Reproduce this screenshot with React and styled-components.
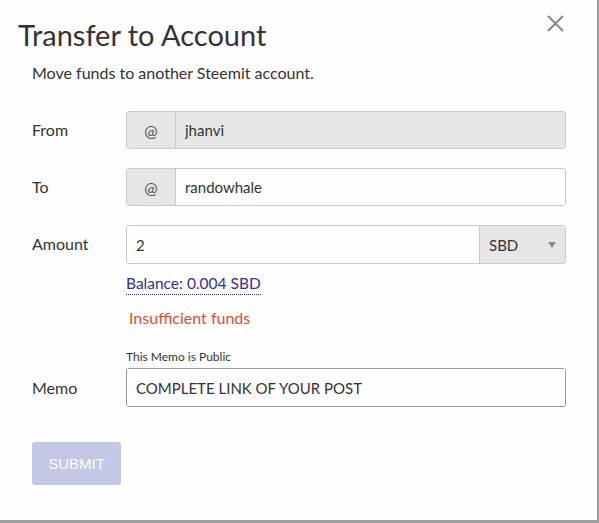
import * as React from "react";
import styled, { createGlobalStyle } from "styled-components";

const GlobalStyle = createGlobalStyle`
  html, body {
    margin: 0;
    padding: 0;
    background: #9e9e9e;
  }
  * {
    box-sizing: border-box;
  }
`;

const font = '"Lato", "Noto Sans", "Liberation Sans", sans-serif';

const Modal = styled.div`
  position: relative;
  width: 597px;
  height: 520px;
  background: #fefefe;
  font-family: ${font};
  color: #333;
  padding: 14px 0 0 0;
`;

const Close = styled.button`
  position: absolute;
  top: 13px;
  right: 32px;
  width: 20px;
  height: 20px;
  padding: 0;
  border: 0;
  background: none;
  display: flex;
  align-items: center;
  justify-content: center;
  cursor: pointer;
`;

const Title = styled.h1`
  margin: 0 0 0 18px;
  font-size: 29px;
  font-weight: 400;
  line-height: 42px;
  color: #333;
`;

const Subtitle = styled.p`
  margin: 5px 0 0 32px;
  font-size: 16px;
  line-height: 24px;
  color: #333;
`;

const Form = styled.div`
  display: grid;
  grid-template-columns: 94px 440px;
  row-gap: 19px;
  margin: 26px 0 0 32px;
  align-items: start;
`;

const Label = styled.label`
  font-size: 16px;
  line-height: 38px;
  color: #333;
`;

const Field = styled.div`
  display: flex;
  flex-direction: column;
`;

const Group = styled.div`
  display: flex;
  height: ${(p) => (p.tall ? "39px" : "38px")};
  border: 1px solid #cacaca;
  border-radius: 3px;
  overflow: hidden;
`;

const Addon = styled.span`
  width: 49px;
  display: flex;
  align-items: center;
  justify-content: center;
  background: #e6e6e6;
  border-right: 1px solid #cacaca;
  font-size: 16px;
  color: #555;
`;

const Input = styled.input`
  flex: 1;
  min-width: 0;
  height: 100%;
  border: 0;
  outline: none;
  padding: 0 9px;
  font-family: ${font};
  font-size: 15px;
  color: #333;
  background: ${(p) => (p.disabled ? "#e6e6e6" : "#fefefe")};
`;

const Select = styled.div`
  width: 86px;
  display: flex;
  align-items: center;
  justify-content: space-between;
  padding: 0 9px 0 9px;
  background: #e6e6e6;
  border-left: 1px solid #cacaca;
  font-size: 15px;
  color: #333;
`;

const Caret = styled.span`
  width: 0;
  height: 0;
  border-left: 4px solid transparent;
  border-right: 4px solid transparent;
  border-top: 6px solid #888;
`;

const Balance = styled.a`
  align-self: flex-start;
  margin-top: 8px;
  font-size: 15.5px;
  line-height: 22px;
  color: #36308c;
  text-decoration: none;
  border-bottom: 1px dotted #36308c;
`;

const Error = styled.div`
  margin: 12px 0 0 3px;
  font-size: 16px;
  line-height: 22px;
  color: #e04b36;
`;

const Hint = styled.div`
  font-size: 12px;
  line-height: 16px;
  color: #333;
  margin: 1px 0 3px;
`;

const MemoLabel = styled(Label)`
  align-self: end;
`;

const MemoGroup = styled(Group)`
  border-color: #999;
`;

const Submit = styled.button`
  margin: 35px 0 0 32px;
  width: 89px;
  height: 43px;
  border: 0;
  border-radius: 3px;
  background: #c3c8e6;
  color: #fefefe;
  font-family: "Liberation Sans", Arial, sans-serif;
  font-size: 15px;
  cursor: not-allowed;
`;

export default function App() {
  return (
    <>
      <GlobalStyle />
      <Modal>
        <Close aria-label="Close">
          <svg width="19" height="19" viewBox="0 0 19 19">
            <path d="M2 2L17 17M17 2L2 17" stroke="#8a8a8a" strokeWidth="2.2" />
          </svg>
        </Close>
        <Title>Transfer to Account</Title>
        <Subtitle>Move funds to another Steemit account.</Subtitle>
        <Form>
          <Label>From</Label>
          <Group>
            <Addon>@</Addon>
            <Input disabled defaultValue="jhanvi" />
          </Group>

          <Label>To</Label>
          <Group>
            <Addon>@</Addon>
            <Input defaultValue="randowhale" />
          </Group>

          <Label>Amount</Label>
          <Field>
            <Group tall>
              <Input defaultValue="2" />
              <Select>
                SBD
                <Caret />
              </Select>
            </Group>
            <Balance>Balance: 0.004 SBD</Balance>
            <Error>Insufficient funds</Error>
          </Field>

          <MemoLabel>Memo</MemoLabel>
          <Field>
            <Hint>This Memo is Public</Hint>
            <MemoGroup tall>
              <Input defaultValue="COMPLETE LINK OF YOUR POST" />
            </MemoGroup>
          </Field>
        </Form>
        <Submit disabled>SUBMIT</Submit>
      </Modal>
    </>
  );
}
